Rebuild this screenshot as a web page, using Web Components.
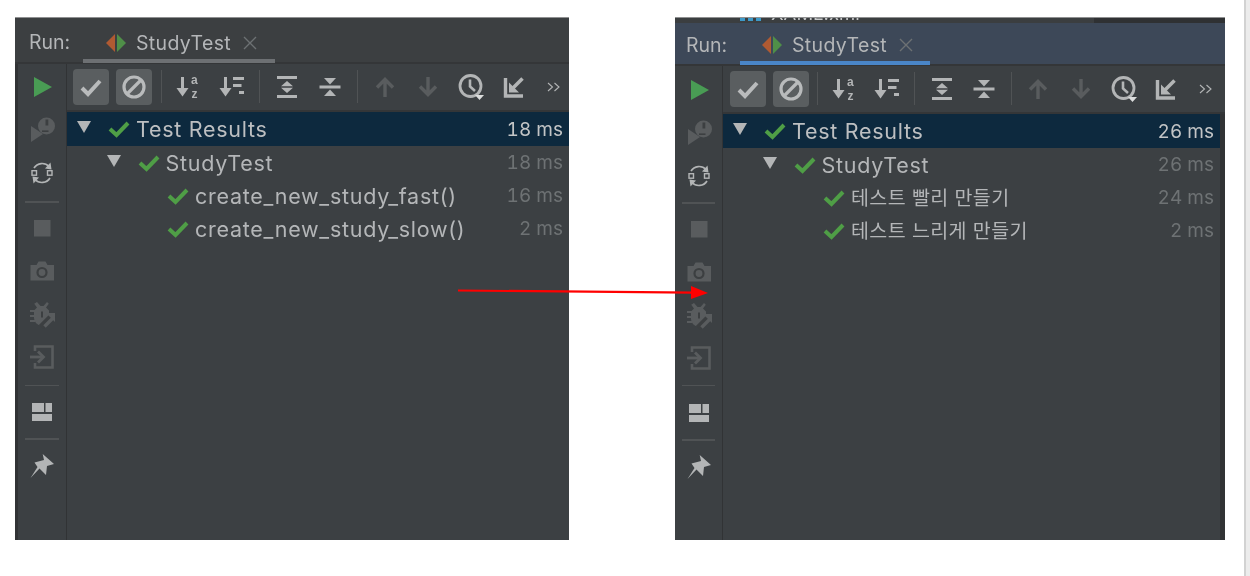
<!DOCTYPE html>
<html lang="en">
<head>
<meta charset="utf-8">
<title>Run panels</title>
<style>
  html, body { margin: 0; padding: 0; background: #ffffff; }
  body { width: 1250px; height: 576px; overflow: hidden; }
</style>
</head>
<body>
<compare-page>
  <run-panel tab="StudyTest" style="--panel-width: 554px; --edge-left: 3px; --rail-width: 48px; --bar-pad: 6px; --head-height: 45px; --head-bg: #3c3f41; --head-pad: 14px; --head-shift: 4px; --tab-pad: 23px; --tab-width: 192px; --tab-line: #6d7073; --tool-gap: 7px; --rail-top: 1px; --hr-a: 7px 7px 4px; --hr-b: 6px 7px 4px;">
    <tree-row level="0" expanded selected time="18 ms">Test Results</tree-row>
    <tree-row level="1" expanded time="18 ms">StudyTest</tree-row>
    <tree-row level="2" time="16 ms">create_new_study_fast()</tree-row>
    <tree-row level="2" time="2 ms">create_new_study_slow()</tree-row>
  </run-panel>
  <run-panel tab="StudyTest" style="--panel-width: 550px; --gap-left: 106px; --rail-width: 47px; --bar-pad: 7px; --head-height: 42px; --head-bg: #3d4858; --head-pad: 11px; --head-shift: 2px; --tab-pad: 22px; --tab-width: 190px; --tab-line: #4a86c8; --tool-gap: 6.6px; --edge-right: 5px; --row-right: 6px; --rail-top: 2px; --hr-a: 5px 7px 4px; --hr-b: 5px 7px 5px;">
    <clipped-strip slot="top">XAML.xml</clipped-strip>
    <tree-row level="0" expanded selected time="26 ms">Test Results</tree-row>
    <tree-row level="1" expanded time="26 ms">StudyTest</tree-row>
    <tree-row level="2" ko time="24 ms">테스트 빨리 만들기</tree-row>
    <tree-row level="2" ko time="2 ms">테스트 느리게 만들기</tree-row>
  </run-panel>
</compare-page>

<script>
// Icons, all in a 26 box
const ICONS = {
  play: `<polygon points="5,3 23,13 5,23" fill="#499c54"/>`,
  check: `<path d="M4 14l6 6L22 7" fill="none" stroke="currentColor" stroke-width="4"/>`,
  ban: `<circle cx="13" cy="13" r="10" fill="none" stroke="currentColor" stroke-width="3.2"/><path d="M6.500 19.500L19.500 6.500" stroke="currentColor" stroke-width="3.2"/>`,
  sortaz: `<path d="M6.500 3v15" stroke="currentColor" stroke-width="3"/><polygon points="0.500,14 12.500,14 6.500,22.500" fill="currentColor"/><text x="15" y="9.500" font-family="Liberation Sans, sans-serif" font-weight="700" font-size="12" fill="currentColor">a</text><text x="15.500" y="24" font-family="Liberation Sans, sans-serif" font-weight="700" font-size="12" fill="currentColor">z</text>`,
  sortdur: `<path d="M6.500 3v15" stroke="currentColor" stroke-width="3"/><polygon points="0.500,14 12.500,14 6.500,22.500" fill="currentColor"/><path d="M14 4.500h11M14 11.500h8.500M20 18.500h5" stroke="currentColor" stroke-width="3"/>`,
  expand: `<path d="M3 3.500h20M3 22.500h20" stroke="currentColor" stroke-width="3"/><polygon points="13,7 19,12.300 7,12.300" fill="currentColor"/><polygon points="13,19 19,13.700 7,13.700" fill="currentColor"/>`,
  collapse: `<path d="M2.500 13h21" stroke="currentColor" stroke-width="3"/><polygon points="13,10.500 19,4 7,4" fill="currentColor"/><polygon points="13,15.500 19,22 7,22" fill="currentColor"/>`,
  up: `<path d="M13 23V6M5 13.500L13 5.500l8 8" fill="none" stroke="currentColor" stroke-width="3.400"/>`,
  down: `<path d="M13 3v17M5 12.500l8 8 8-8" fill="none" stroke="currentColor" stroke-width="3.400"/>`,
  clock: `<circle cx="12.500" cy="12" r="10.500" fill="none" stroke="currentColor" stroke-width="2.800"/><path d="M12 5.500v7l5 4.500" fill="none" stroke="currentColor" stroke-width="2.600"/><polygon points="17,21 26,21 21.500,26" fill="#dcdddd"/>`,
  import: `<path d="M4.500 4v18H22" fill="none" stroke="currentColor" stroke-width="3.400"/><path d="M10 16L21.500 4.500" stroke="currentColor" stroke-width="3.600"/><polygon points="8,8.500 8,18.500 18,18.500" fill="currentColor"/>`,
  more: `<path d="M7 9l4.500 4L7 17M13.500 9l4.500 4-4.500 4" fill="none" stroke="currentColor" stroke-width="1.100"/>`,
  rerun: `<polygon points="2,9 2,25 14,17" fill="currentColor"/><circle cx="17.500" cy="9" r="8.500" fill="currentColor"/><rect x="16.500" y="2.500" width="2.800" height="6" fill="#3c3f41"/><path d="M13 14.200h6.500" fill="none" stroke="#3c3f41" stroke-width="1.600"/>`,
  toggle: `<path d="M5 8A9.500 9.500 0 0 1 20 6.500M21 18A9.500 9.500 0 0 1 6 19.500" fill="none" stroke="currentColor" stroke-width="1.700"/><polygon points="21.500,2.500 22.500,9.500 16,8.500" fill="currentColor"/><polygon points="4.500,23.500 3.500,16.500 10,17.500" fill="currentColor"/><rect x="3" y="10.700" width="4.500" height="4.500" fill="none" stroke="currentColor" stroke-width="1.400"/><rect x="18.500" y="10.700" width="4.500" height="4.500" fill="none" stroke="currentColor" stroke-width="1.400"/>`,
  stop: `<rect x="5" y="5" width="16.500" height="16.500" fill="currentColor"/>`,
  camera: `<path d="M1.500 7h6l2-3.500h7l2 3.500h6.500v15.500H1.500z" fill="currentColor"/><circle cx="13" cy="14.500" r="4.500" fill="none" stroke="#3c3f41" stroke-width="2.200"/>`,
  bug: `<path d="M8 1l3.500 4h3L18 1l1.800 1.800-2.800 3.700 3 3v7.500a7.500 7.500 0 0 1-15 0v-7.500l3-3-2.800-3.700z" fill="currentColor"/><path d="M1 10h5M1 15h5M1 20h5" stroke="currentColor" stroke-width="2.200"/><path d="M13 10.500v6" stroke="#3c3f41" stroke-width="2"/><path d="M12 26L24 14" stroke="#3c3f41" stroke-width="6"/><path d="M15.500 25.500L23.500 17.500" stroke="currentColor" stroke-width="3.400"/><polygon points="17,12 26,12 26,21" fill="currentColor"/>`,
  exit: `<path d="M6 7V2.500h17.500v21H6V19" fill="none" stroke="currentColor" stroke-width="2.600"/><path d="M1 13h12" stroke="currentColor" stroke-width="2.800"/><path d="M9 7.500l5.500 5.500L9 18.500" fill="none" stroke="currentColor" stroke-width="2.800"/>`,
  layout: `<rect x="3" y="4" width="12" height="9" fill="currentColor"/><rect x="16.500" y="4" width="6.500" height="9" fill="currentColor"/><rect x="3" y="15" width="20" height="7" fill="currentColor"/>`,
  pin: `<path d="M13.700 1L25 11l-7 2-1 9-6.500-6.500L1.500 25l7-11-3-4.500L15 7z" fill="currentColor"/>`
};

class ToolIcon extends HTMLElement {
  constructor() {
    super();
    this.attachShadow( {mode: 'open'} );
    const name = this.getAttribute( 'name' );
    this.shadowRoot.innerHTML = `
      <style>
        :host {
          align-items: center;
          box-sizing: border-box;
          color: #b3b5b6;
          display: flex;
          flex: none;
          height: 36px;
          justify-content: center;
          width: 36px;
        }
        :host( [dim] ) { color: #595c5e; }
        :host( [on] ) { background: #5a5e60; border-radius: 4px; color: #b9bbbc; }
        svg { display: block; overflow: visible; }
      </style>
      <svg width="26" height="26" viewBox="0 0 26 26">${ICONS[name] || ''}</svg>
    `;
  }
}
customElements.define( 'tool-icon', ToolIcon );

class ToolSeparator extends HTMLElement {
  constructor() {
    super();
    this.attachShadow( {mode: 'open'} );
    this.shadowRoot.innerHTML = `
      <style>
        :host { align-self: center; display: flex; flex: none; height: 33px; justify-content: center; width: 5px; }
        div { background: #505355; height: 100%; width: 1px; }
      </style>
      <div></div>
    `;
  }
}
customElements.define( 'tool-separator', ToolSeparator );

class ClippedStrip extends HTMLElement {
  constructor() {
    super();
    this.attachShadow( {mode: 'open'} );
    this.shadowRoot.innerHTML = `
      <style>
        :host {
          background: linear-gradient( 90deg, #3b3e40 0, #3b3e40 419px, #2f3133 419px );
          color: #c5c7c8;
          display: flex;
          flex: none;
          gap: 10px;
          height: 5px;
          overflow: hidden;
          padding-left: 65px;
        }
        i { background: repeating-linear-gradient( 90deg, #3d9ac9 0 5px, transparent 5px 8px ); flex: none; height: 3px; width: 21px; }
        span { font: 18.5px/20px Inter, sans-serif; margin-top: -15px; }
      </style>
      <i></i><span><slot></slot></span>
    `;
  }
}
customElements.define( 'clipped-strip', ClippedStrip );

class TreeRow extends HTMLElement {
  constructor() {
    super();
    this.attachShadow( {mode: 'open'} );
    const level = Number( this.getAttribute( 'level' ) || 0 );
    const arrow = this.hasAttribute( 'expanded' )
      ? `<svg class="arrow" width="18" height="14" viewBox="0 0 18 14"><polygon points="2,1 16,1 9,13" fill="#b4b6b7"/></svg>`
      : `<span class="arrow"></span>`;
    this.shadowRoot.innerHTML = `
      <style>
        :host {
          align-items: center;
          box-sizing: border-box;
          color: #b4b6b8;
          display: flex;
          flex: none;
          font: 21.5px/33px Inter, "Noto Sans CJK KR", sans-serif;
          height: 33px;
          letter-spacing: .72px;
          padding-left: calc( ${level} * 29.5px + 8px );
          padding-right: var( --row-right, 6px );
          white-space: nowrap;
        }
        :host( [selected] ) { background: #0d293e; color: #bdbfc1; height: 34px; }
        :host( [ko] ) { font-size: 19.5px; letter-spacing: .4px; }
        .arrow { display: block; flex: none; margin-top: -4px; width: 18px; }
        .check { display: block; flex: none; margin-left: 15px; margin-right: 6px; }
        .label { padding-top: 1px; }
        .time { color: #6e7274; font-feature-settings: "tnum"; font-size: 19px; letter-spacing: 0; margin-left: auto; }
        :host( [selected] ) .time { color: #c3c5c6; }
      </style>
      ${arrow}
      <svg class="check" width="22" height="18" viewBox="0 0 22 18"><path d="M2 9l6.500 6L20 3" fill="none" stroke="#4f9e46" stroke-width="4"/></svg>
      <span class="label"><slot></slot></span>
      <span class="time">${this.getAttribute( 'time' ) || ''}</span>
    `;
  }
}
customElements.define( 'tree-row', TreeRow );

class RunPanel extends HTMLElement {
  constructor() {
    super();
    this.attachShadow( {mode: 'open'} );
    this.shadowRoot.innerHTML = `
      <style>
        :host {
          background: #3c4043;
          border-top: 1px solid #8f9091;
          box-sizing: border-box;
          display: flex;
          flex-direction: column;
          flex: none;
          filter: blur( .35px );
          height: 523px;
          margin-left: var( --gap-left, 15px );
          margin-top: 17px;
          overflow: hidden;
          width: var( --panel-width );
        }
        header {
          align-items: center;
          background: var( --head-bg );
          border-bottom: 2px solid #343638;
          box-sizing: border-box;
          color: #b4b6b8;
          display: flex;
          flex: none;
          font: 19.5px Inter, sans-serif;
          height: calc( var( --head-height ) + 1px );
          padding-left: var( --head-pad );
        }
        .run { flex: none; margin-top: var( --head-shift ); width: 54px; }
        .tab {
          align-items: center;
          align-self: stretch;
          border-bottom: 4px solid var( --tab-line );
          box-sizing: border-box;
          display: flex;
          flex: none;
          margin-bottom: -1px;
          padding: calc( 4px + var( --head-shift ) ) 0 0 var( --tab-pad );
          width: var( --tab-width );
        }
        .tab svg { display: block; flex: none; }
        .tab span { letter-spacing: .35px; margin-left: 10px; }
        .tab .close { margin-left: 12px; }
        main { display: flex; flex: 1; min-height: 0; padding-left: var( --edge-left, 0 ); background: #313335; }
        .rail {
          background: #3c4043;
          border-right: 1px solid #313335;
          display: flex;
          flex: none;
          flex-direction: column;
          padding-top: var( --rail-top );
          width: var( --rail-width );
        }
        .rail tool-icon { height: 43px; width: 47px; }
        .rail hr { background: #505355; border: none; flex: none; height: 1.500px; margin: 5px 7px; }
        .rail hr.a { margin: var( --hr-a ); }
        .rail hr.b { margin: var( --hr-b ); }
        .content { display: flex; flex: 1; flex-direction: column; min-width: 0; background: #3c4043; }
        .bar {
          align-items: center;
          border-bottom: 2px solid #343638;
          box-sizing: border-box;
          display: flex;
          flex: none;
          gap: var( --tool-gap );
          height: 48px;
          overflow: hidden;
          padding: 0 0 1px var( --bar-pad );
        }
        .more { margin-left: -3px; }
        .tree {
          background: #3c4043;
          display: flex;
          flex: 1;
          flex-direction: column;
          margin-right: var( --edge-right, 0 );
        }
        .wrap { background: #313335; display: flex; flex: 1; flex-direction: column; min-height: 0; }
      </style>
      <slot name="top"></slot>
      <header>
        <span class="run">Run:</span>
        <div class="tab">
          <svg width="20" height="18" viewBox="0 0 20 18"><polygon points="9,0 0,9 9,18" fill="#b05a32"/><polygon points="11,0 20,9 11,18" fill="#4f8f48"/></svg>
          <span>${this.getAttribute( 'tab' )}</span>
          <svg class="close" width="14" height="14" viewBox="0 0 14 14"><path d="M1 1l12 12M13 1L1 13" stroke="#6d7173" stroke-width="1.400"/></svg>
        </div>
      </header>
      <main>
        <div class="rail">
          <tool-icon name="play"></tool-icon>
          <tool-icon name="rerun" dim></tool-icon>
          <tool-icon name="toggle"></tool-icon>
          <hr class="a">
          <tool-icon name="stop" dim></tool-icon>
          <tool-icon name="camera" dim></tool-icon>
          <tool-icon name="bug" dim></tool-icon>
          <tool-icon name="exit" dim></tool-icon>
          <hr class="b">
          <tool-icon name="layout"></tool-icon>
          <hr>
          <tool-icon name="pin"></tool-icon>
        </div>
        <div class="content">
          <div class="bar">
            <tool-icon name="check" on></tool-icon>
            <tool-icon name="ban" on></tool-icon>
            <tool-separator></tool-separator>
            <tool-icon name="sortaz"></tool-icon>
            <tool-icon name="sortdur"></tool-icon>
            <tool-separator></tool-separator>
            <tool-icon name="expand"></tool-icon>
            <tool-icon name="collapse"></tool-icon>
            <tool-separator></tool-separator>
            <tool-icon name="up" dim></tool-icon>
            <tool-icon name="down" dim></tool-icon>
            <tool-icon name="clock"></tool-icon>
            <tool-icon name="import"></tool-icon>
            <tool-icon class="more" name="more"></tool-icon>
          </div>
          <div class="wrap">
            <div class="tree"><slot></slot></div>
          </div>
        </div>
      </main>
    `;
  }
}
customElements.define( 'run-panel', RunPanel );

class ComparePage extends HTMLElement {
  constructor() {
    super();
    this.attachShadow( {mode: 'open'} );
    this.shadowRoot.innerHTML = `
      <style>
        :host { display: flex; height: 576px; position: relative; width: 1250px; }
        .scroll { background: #ececec; border-left: 2px solid #d2d2d2; box-sizing: border-box; flex: none; height: 576px; margin-left: auto; width: 6px; }
        .arrow { left: 0; pointer-events: none; position: absolute; top: 0; }
      </style>
      <slot></slot>
      <div class="scroll"></div>
      <svg class="arrow" width="1250" height="576" viewBox="0 0 1250 576">
        <path d="M458 290.500L693 292.700" stroke="#ff0000" stroke-width="2.200"/>
        <polygon points="691,286 708,293 691,299" fill="#ff0000"/>
      </svg>
    `;
  }
}
customElements.define( 'compare-page', ComparePage );
</script>
</body>
</html>
